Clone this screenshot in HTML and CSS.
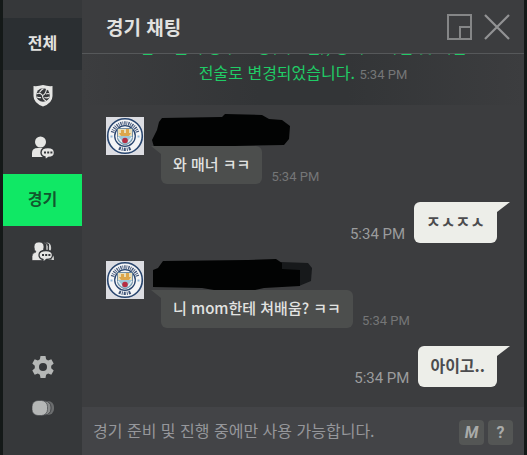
FILE: index.html
```html
<!DOCTYPE html>
<html lang="ko">
<head>
<meta charset="utf-8">
<title>경기 채팅</title>
<link rel="stylesheet" href="styles.css">
</head>
<body>
<svg class="defs" aria-hidden="true">
  <symbol id="crest" viewBox="0 0 38 38">
    <rect width="38" height="38" fill="#dcdde2"/>
    <circle cx="19" cy="19" r="17.300" fill="#f4f5f6" stroke="#29466f" stroke-width="1.600"/>
    <path d="M6.500 15.500A13 13 0 0 1 31.500 15.500" fill="none" stroke="#3f5478" stroke-width="3.600" stroke-dasharray="1.300 .9 .8 1"/>
    <path d="M13 31A13.500 13.500 0 0 0 25 31" fill="none" stroke="#3f5478" stroke-width="3.400" stroke-dasharray="2 1 .9 1"/>
    <path d="M4.500 19.500h2M31.500 19.500h2" stroke="#8fb7d8" stroke-width="2"/>
    <circle cx="19" cy="19" r="10.300" fill="#f4f5f6" stroke="#29466f" stroke-width="1.300"/>
    <path d="M11.500 11.500h15v9q0 5-7.500 7.500q-7.500-2.500-7.500-7.500z" fill="#9fc6d8" stroke="#5c7790" stroke-width=".8"/>
    <path d="M12 12h14v7h-14z" fill="#e9dfba"/>
    <path d="M13 16h12l-2 3h-8zM15 13h3v4h-3zM20 12h3v4h-3z" fill="#dda64b"/>
    <path d="M12 20l4 5M26 20l-4 5" stroke="#f1f3f4" stroke-width="1.2"/>
    <circle cx="19" cy="23.500" r="2.800" fill="#b52d43"/>
  </symbol>
</svg>
<div class="app">
  <nav class="rail" aria-label="채널">
    <button class="tab tab-all">전체</button>
    <button class="tab" aria-label="클럽">
      <svg width="22" height="24" viewBox="0 0 22 24"><path d="M11 1Q16 2.500 20.500 2V12q0 7-9.500 10.500Q1.500 19 1.500 12V2Q6 2.500 11 1z" fill="#e6e6e4"/><circle cx="11" cy="11" r="6.800" fill="#35373a"/><path d="M10.500 11.500Q8 8 4.500 10M10.500 11.500Q14 10 14.500 5M10.500 11.500Q10.500 15 14 17M7.500 8.500Q9 6 11.500 4.500M14 10Q16.500 9 17.500 10M12.500 13.500Q15.500 14.500 17 13M9 13.500Q7 14 5 13" stroke="#e6e6e4" stroke-width="1.100" fill="none"/></svg>
    </button>
    <button class="tab" aria-label="친구">
      <svg width="24" height="24" viewBox="0 0 24 24"><circle cx="9.500" cy="6" r="5.500" fill="#e6e6e4"/><path d="M1 21v-4q0-5 6-5h6q4 0 5 3v6z" fill="#e6e6e4"/><path d="M17 11.500q6.500 0 6.500 5t-6 5L14 24v-3q-4-1-4-4.500 0-5 7-5z" fill="#e6e6e4" stroke="#35373a" stroke-width="1.400"/><path d="M13 15.500h2v2h-2zM16.200 15.500h2v2h-2zM19.400 15.500h2v2h-2z" fill="#35373a"/></svg>
    </button>
    <button class="tab tab-match" aria-current="true">경기</button>
    <button class="tab" aria-label="그룹">
      <svg width="24" height="22" viewBox="0 0 24 22"><path d="M15 1.500q6 0 5 7-1 2-2 2.500 5 1 5 8h-5V3z" fill="#cfd0cf"/><path d="M12 1.500q6 0 5 7-1 2-2 2.500 5 1 5 8h-5V3z" fill="#e6e6e4" stroke="#35373a" stroke-width=".8"/><path d="M1 19.500v-4q0-4 4-4.500-2-2-2-5 0-5 5-5t5 5q0 3-2 5 4 .5 4 4.500v4z" fill="#e6e6e4" stroke="#35373a" stroke-width=".7"/><path d="M15 9.500q6.500 0 6.500 4.500t-6 4.500L12 21.500v-3q-4-1-4-4.500 0-4.500 7-4.500z" fill="#e6e6e4" stroke="#35373a" stroke-width="1.300"/><path d="M11 13h2v2h-2zM14.200 13h2v2h-2zM17.400 13h2v2h-2z" fill="#35373a"/></svg>
    </button>
    <div class="tools">
      <button class="tool" aria-label="설정">
        <svg width="22" height="22" viewBox="0 0 22 22"><path d="M8.500 0h5l.6 3.300 2 1.200 3.200-1.200 2.400 4.300-2.500 2.200v2.400l2.500 2.200-2.400 4.300-3.200-1.200-2 1.200-.6 3.300h-5l-.6-3.300-2-1.200-3.200 1.200L.300 14.400 2.800 12.200V9.800L.300 7.600l2.400-4.300 3.200 1.200 2-1.200z" fill="#b5b7b6"/><circle cx="11" cy="11" r="4" fill="#35373a"/></svg>
      </button>
      <button class="tool" aria-label="투명도">
        <svg width="22" height="16" viewBox="0 0 22 16"><rect x="6" y="1" width="16" height="14" rx="6" fill="#6b6d6e"/><rect x="4" y="1" width="15" height="14" rx="6" fill="#8b8d8d" stroke="#45474a"/><rect x="0" y=".5" width="15.500" height="15" rx="6" fill="#b5b7b6" stroke="#45474a" stroke-width=".7"/></svg>
      </button>
    </div>
  </nav>
  <main class="chat">
    <header class="head">
      <h1>경기 채팅</h1>
      <button class="win" aria-label="작은 창"><svg width="26" height="26" viewBox="0 0 26 26"><path d="M2 1h23v24H2zM25 13H14v12" fill="none" stroke="#858687" stroke-width="2"/></svg></button>
      <button class="win" aria-label="닫기"><svg width="26" height="26" viewBox="0 0 26 26"><path d="M1 1l24 24M25 1L1 25" stroke="#929394" stroke-width="2.200"/></svg></button>
    </header>
    <section class="log">
      <p class="notice">팀 전술이 공수 조정(커스텀), 공격 스타일 및 개별<br>전술로 변경되었습니다. <time>5:34 PM</time></p>
      <article class="row">
        <svg class="crest"><use href="#crest"/></svg>
        <div class="body">
          <svg class="name" width="144" height="36" viewBox="0 0 144 36"><path d="M8 9l3-4 60-1 3-3 37 1 7 4 13 1 8 6-1 13-5 6-50 1-30 2-50-1-2-7 5-10z" fill="#020303"/></svg>
          <p class="bubble theirs">와 매너 ㅋㅋ</p>
        </div>
        <time>5:34 PM</time>
      </article>
      <article class="row mine">
        <time>5:34 PM</time>
        <p class="bubble ours">ㅈㅅㅈㅅ</p>
      </article>
      <article class="row">
        <svg class="crest"><use href="#crest"/></svg>
        <div class="body">
          <svg class="name" width="166" height="36" viewBox="0 0 166 36"><path d="M130 5l27 1 4 5-1 13-12 5-20-4z" fill="#17191b"/><path d="M12 4l85-1 28-1 6 4v6l18 1v16l-36 2-17 4H75l-24-4-49-1V13l5-2z" fill="#020303"/></svg>
          <p class="bubble theirs">니 mom한테 쳐배움? ㅋㅋ</p>
        </div>
        <time>5:34 PM</time>
      </article>
      <article class="row mine">
        <time>5:34 PM</time>
        <p class="bubble ours">아이고..</p>
      </article>
    </section>
    <footer class="foot">
      <input class="entry" type="text" aria-label="메시지" placeholder="경기 준비 및 진행 중에만 사용 가능합니다." disabled>
      <button class="key slant">M</button>
      <button class="key">?</button>
    </footer>
  </main>
</div>
</body>
</html>
```

FILE: styles.css
```css
* { box-sizing: border-box; }
body {
  margin: 0;
  background: #141918;
  color: #e2e2e0;
  font-family: "Noto Sans CJK KR", sans-serif;
}
button { border: 0; padding: 0; background: none; color: inherit; font: inherit; }
h1, p { margin: 0; }
svg { display: block; }
.defs { display: none; }
.app {
  display: flex;
  height: 100vh;
  padding: 0 3px;
}
.rail {
  display: flex;
  flex-direction: column;
  width: 79px;
  padding: 18px 0 27px;
  background: #36383a;
}
.tab, .tool {
  display: flex;
  align-items: center;
  justify-content: center;
  width: 100%;
}
.tab { height: 52px; font-size: 16px; font-weight: 700; line-height: 20px; }
.tab-all, .tab-match { padding-bottom: 4px; }
.tab-all { background: #2b2f32; }
.tab-match { background: #10e865; color: #12562e; }
.tools { margin-top: auto; }
.tool { height: 41px; }
.chat {
  display: flex;
  flex: 1;
  flex-direction: column;
  min-width: 0;
  background: #3c3d3f;
}
.head {
  display: flex;
  align-items: center;
  gap: 12px;
  height: 54px;
  padding: 0 14px 0 24px;
  border-bottom: 1px solid #56585a;
}
.head h1 { flex: 1; font-size: 19px; font-weight: 700; line-height: 24px; }
.log {
  display: flex;
  flex: 1;
  flex-direction: column;
  justify-content: flex-end;
  gap: 18px;
  min-height: 0;
  padding: 0 14px 20px 24px;
  overflow: hidden;
}
.notice {
  margin: 0 -14px -6px -24px;
  padding: 20px 0;
  background: linear-gradient(90deg, #3c3d3f, #333537 40%, #333537 60%, #3c3d3f);
  color: #20cc66;
  font-size: 16px;
  line-height: 26px;
  text-align: center;
}
time {
  color: #757677;
  font-family: Roboto, sans-serif;
  font-size: 13px;
  line-height: 14px;
  white-space: nowrap;
}
.row { display: flex; align-items: flex-end; }
.crest { align-self: flex-start; width: 38px; height: 38px; }
.body { position: relative; margin: 0 9px 0 17px; padding-top: 29px; }
.name { position: absolute; top: -4px; left: -10px; }
.bubble {
  position: relative;
  font-weight: 500;
  line-height: 22px;
  white-space: nowrap;
}
.theirs {
  padding: 7px 12px 9px;
  border-radius: 0 6px 6px 6px;
  background: #4c4e4d;
  color: #e2e3e1;
  font-size: 15px;
}
.theirs::before {
  content: "";
  position: absolute;
  top: 0;
  left: -10px;
  width: 10px;
  height: 8px;
  background: #4c4e4d;
  clip-path: polygon(0 0, 100% 0, 100% 100%);
}
.mine { justify-content: flex-end; gap: 9px; padding-right: 13px; }
.mine time { color: #9b9c9d; font-size: 15px; line-height: 18px; }
.ours {
  padding: 8px 12px 11px;
  border-radius: 6px 0 6px 6px;
  background: #edeee9;
  color: #4c4c4e;
  font-size: 16px;
  font-weight: 700;
}
.ours::after {
  content: "";
  position: absolute;
  top: 0;
  left: 100%;
  width: 13px;
  height: 10px;
  background: #edeee9;
  clip-path: polygon(0 0, 100% 0, 0 100%);
}
.foot {
  display: flex;
  align-items: center;
  gap: 4px;
  height: 48px;
  padding: 2px 11px 0;
  background: #434447;
}
.entry {
  flex: 1;
  min-width: 0;
  padding: 0 0 4px;
  border: 0;
  background: none;
  font: 16px/24px "Noto Sans CJK KR", sans-serif;
}
.entry::placeholder { color: #96979b; opacity: 1; }
.key {
  width: 25px;
  height: 25px;
  border-radius: 4px;
  background: #545655;
  color: #a9aba9;
  font-family: Roboto, sans-serif;
  font-size: 16px;
  font-weight: 700;
  line-height: 25px;
}
.slant { font-style: italic; }
```
